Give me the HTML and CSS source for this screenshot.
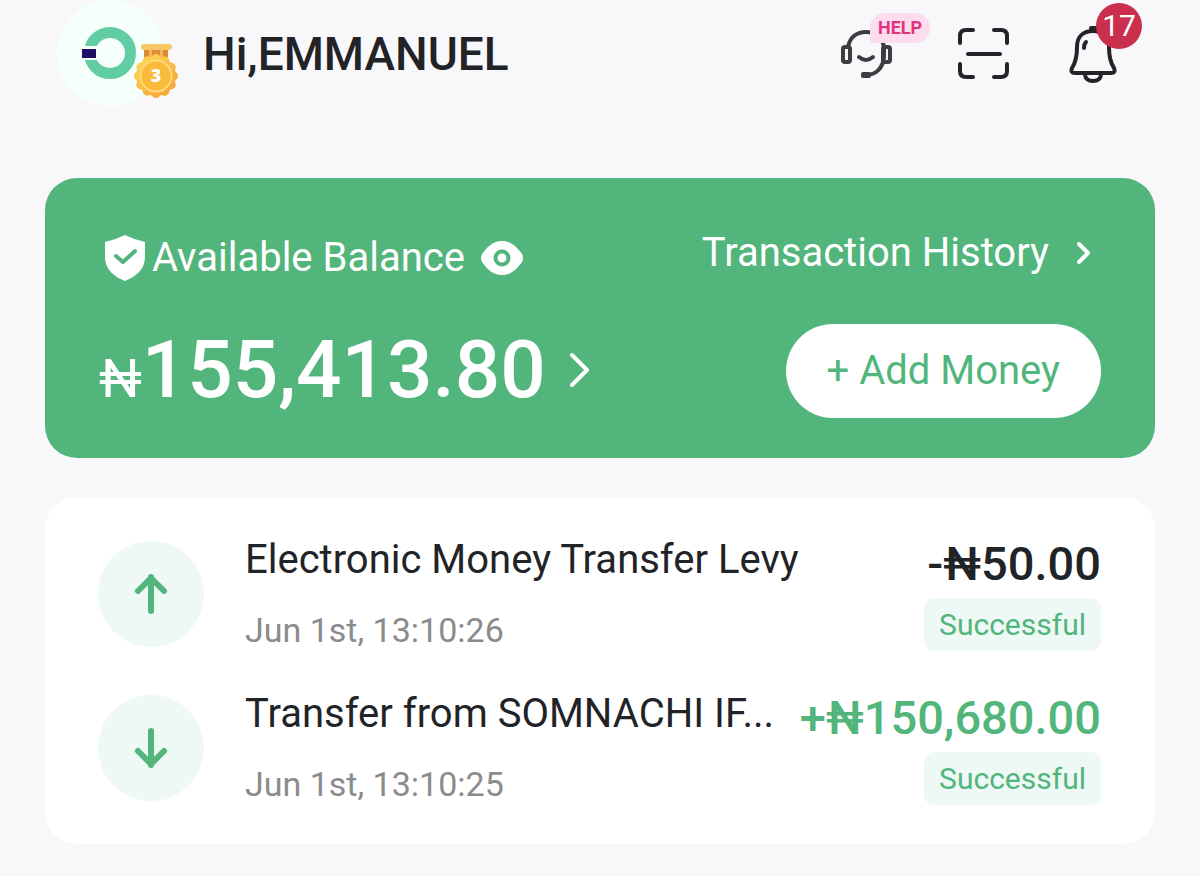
FILE: index.html
```html
<!DOCTYPE html>
<html lang="en">
<head>
  <meta charset="UTF-8">
  <meta name="viewport" content="width=device-width, initial-scale=1.0">
  <title>Wallet</title>
  <link rel="stylesheet" href="styles.css">
</head>
<body>

  <header class="topbar">
    <div class="profile">
      <svg class="avatar" viewBox="0 0 124 108" aria-hidden="true">
        <defs>
          <linearGradient id="gold" gradientUnits="userSpaceOnUse" x1="84" y1="58" x2="116" y2="98">
            <stop offset="0" stop-color="#ffd653"/>
            <stop offset="1" stop-color="#f6a035"/>
          </linearGradient>
        </defs>
        <circle cx="54" cy="53" r="53" fill="#f5fffb"/>
        <circle cx="54" cy="53" r="20.500" fill="none" stroke="#62cda3" stroke-width="11"/>
        <rect x="24" y="46" width="18" height="14" fill="#f5fffb"/>
        <rect x="26" y="49" width="14" height="9" fill="#1f0e64"/>
        <rect x="88" y="48" width="24" height="10" fill="#df8a36"/>
        <rect x="93" y="48" width="3" height="10" fill="#f4b45c"/>
        <rect x="104" y="48" width="3" height="10" fill="#f4b45c"/>
        <rect x="85" y="44" width="31" height="6" rx="3" fill="#f9c766"/>
        <circle cx="100" cy="76" r="18" fill="none" stroke="url(#gold)" stroke-width="8" stroke-linecap="round" pathLength="12" stroke-dasharray=".01 .99"/>
        <circle cx="100" cy="76" r="20" fill="url(#gold)"/>
        <circle cx="100" cy="76" r="15.500" fill="#fabb3a" stroke="#ffd877" stroke-width="2"/>
        <text x="100" y="82" class="medal-level">3</text>
      </svg>
      <h1 class="greeting">Hi,EMMANUEL</h1>
    </div>

    <nav class="actions" aria-label="Shortcuts">
      <button class="icon-btn" type="button" aria-label="Customer service">
        <svg width="58" height="54" viewBox="0 0 58 54" fill="none" stroke="#3c3d41" stroke-width="4">
          <path d="M9 21C10 11 17 5 27 5C37 5 44 11 45 21V30C44 41 37 48 27 48"/>
          <rect x="4" y="20" width="7" height="15" rx="2"/>
          <rect x="44" y="20" width="7" height="15" rx="2"/>
          <path d="M20 30Q27 36 34 30" stroke-width="4" stroke-linecap="round"/>
          <rect x="22" y="45" width="10" height="6" rx="2" fill="#3c3d41" stroke="none"/>
        </svg>
        <span class="help-tag">HELP</span>
      </button>
      <button class="icon-btn" type="button" aria-label="Scan">
        <svg width="54" height="54" viewBox="0 0 54 54" fill="none" stroke="#222428" stroke-width="4" stroke-linecap="round" stroke-linejoin="round">
          <path d="M4 16V9Q4 3 10 3H17M38 3H45Q51 3 51 9V16M51 37V44Q51 50 45 50H38M17 50H10Q4 50 4 44V37M12 27H44"/>
        </svg>
      </button>
      <button class="icon-btn" type="button" aria-label="Notifications">
        <svg width="48" height="60" viewBox="3 0 48 60" fill="none" stroke="#222428" stroke-width="4" stroke-linecap="round" stroke-linejoin="round">
          <path d="M27 7C16 7 11 14 11 23C11 32 10 38 6 44Q4 49 9 49H45Q50 49 48 44C44 38 43 32 43 23C43 14 38 7 27 7Z"/>
          <path d="M25 4H30M19 51Q20 57 27 57Q34 57 35 51M18 24Q18 20 20 18"/>
        </svg>
        <span class="count">17</span>
      </button>
    </nav>
  </header>

  <main>
    <section class="balance-card">
      <div class="balance-info">
        <div class="balance-label">
          <svg width="42" height="48" viewBox="0 0 42 48" aria-hidden="true">
            <path d="M21 1Q31 6 41 8V23C41 36 31 43 21 47C11 43 1 36 1 23V8Q11 6 21 1Z" fill="#fff"/>
            <path d="M12 22L19 28L31 17" fill="none" stroke="#52b57c" stroke-width="4" stroke-linecap="round" stroke-linejoin="round"/>
          </svg>
          <span>Available Balance</span>
          <button class="plain-btn eye" type="button" aria-label="Hide balance">
            <svg width="42" height="34" viewBox="0 0 42 34">
              <path d="M21 0C30 0 36 6 41 13Q43 17 41 21C36 28 30 34 21 34C12 34 6 28 1 21Q-1 17 1 13C6 6 12 0 21 0Z" fill="#fff"/>
              <circle cx="21" cy="17" r="6.500" fill="none" stroke="#52b57c" stroke-width="4"/>
            </svg>
          </button>
        </div>
        <a class="balance" href="#">
          <span><span class="currency">₦</span>155,413.80</span>
          <svg width="20" height="36" viewBox="0 0 20 36" fill="none" stroke="#fff" stroke-width="4" stroke-linecap="round" stroke-linejoin="round" aria-hidden="true">
            <path d="M2 3L17 18L2 33"/>
          </svg>
        </a>
      </div>
      <div class="balance-actions">
        <a class="history" href="#">
          <span>Transaction History</span>
          <svg width="14" height="24" viewBox="0 0 14 24" fill="none" stroke="#fff" stroke-width="4" stroke-linecap="round" stroke-linejoin="round" aria-hidden="true">
            <path d="M2 3L11 12L2 21"/>
          </svg>
        </a>
        <button class="add-btn" type="button">+ Add Money</button>
      </div>
    </section>

    <ul class="transactions">
      <li class="transaction">
        <span class="direction">
          <svg width="34" height="40" viewBox="0 0 34 40" fill="none" stroke="#52b57c" stroke-width="6" stroke-linecap="round" stroke-linejoin="round" aria-hidden="true">
            <path d="M17 37V3M4 17L17 4L30 17"/>
          </svg>
        </span>
        <div class="details">
          <p class="title">Electronic Money Transfer Levy</p>
          <p class="date">Jun 1st, 13:10:26</p>
        </div>
        <div class="result">
          <p class="amount">-₦50.00</p>
          <span class="status">Successful</span>
        </div>
      </li>
      <li class="transaction">
        <span class="direction">
          <svg width="34" height="40" viewBox="0 0 34 40" fill="none" stroke="#52b57c" stroke-width="6" stroke-linecap="round" stroke-linejoin="round" aria-hidden="true">
            <path d="M17 3V37M4 23L17 36L30 23"/>
          </svg>
        </span>
        <div class="details">
          <p class="title">Transfer from SOMNACHI IF...</p>
          <p class="date">Jun 1st, 13:10:25</p>
        </div>
        <div class="result">
          <p class="amount incoming">+₦150,680.00</p>
          <span class="status">Successful</span>
        </div>
      </li>
    </ul>
  </main>

</body>
</html>
```
FILE: styles.css
```css
* { box-sizing: border-box; }
body { margin: 0; padding: 0 45px 32px; background-color: #f8f8fb; color: #222326; font-family: Roboto, "Liberation Sans", sans-serif; }
h1, p, ul { margin: 0; padding: 0; }
a { color: inherit; text-decoration: none; }
button { font-family: inherit; cursor: pointer; }
svg { display: block; flex-shrink: 0; }

/* top bar */
.topbar { display: flex; justify-content: space-between; align-items: center; height: 108px; margin: 0 38px 70px 11px; }
.profile { display: flex; align-items: center; gap: 23px; }
.avatar { width: 124px; height: 108px; }
.medal-level { font-family: "Open Sans", sans-serif; font-size: 18px; font-weight: 800; fill: #fff; text-anchor: middle; }
.greeting { font-size: 46px; font-weight: 500; line-height: 56px; }
.actions { display: flex; align-items: center; gap: 59px; }
.icon-btn { position: relative; padding: 0; border: 0; background: none; }
.help-tag { position: absolute; top: -14px; left: 31px; padding: 0 8px; border-radius: 15px 15px 15px 4px; background-color: #fddcee; color: #e2337f; font-size: 18px; font-weight: 700; line-height: 30px; }
.count { position: absolute; top: -21px; left: 27px; width: 46px; border-radius: 50%; background-color: #cb2f4e; color: #fff; font-size: 30px; line-height: 46px; text-align: center; }

/* balance */
.balance-card { display: flex; justify-content: space-between; padding: 51px 54px 40px; border-radius: 32px; background-color: #52b57c; color: #fff; }
.plain-btn { padding: 0; border: 0; background: none; }
.balance-label { display: flex; align-items: center; gap: 6px; margin-left: 5px; font-size: 40px; line-height: 58px; }
.eye { margin-left: 10px; }
.balance { display: flex; align-items: center; gap: 24px; margin-top: 36px; font-size: 80px; font-weight: 500; line-height: 94px; }
.currency { font-size: 54px; font-weight: 400; line-height: 54px; }
.balance-actions { display: flex; flex-direction: column; align-items: flex-end; gap: 47px; }
.history { display: flex; align-items: center; gap: 28px; margin-right: 10px; font-size: 40px; line-height: 48px; }
.add-btn { padding: 0 41px; border: 0; border-radius: 47px; background-color: #fff; color: #52b57c; font-size: 40px; line-height: 94px; }

/* transactions */
.transactions { display: flex; flex-direction: column; gap: 34px; margin-top: 39px; padding: 37px 54px 36px 53px; border-radius: 32px; background-color: #fff; list-style: none; }
.transaction { display: flex; align-items: center; }
.direction { display: flex; justify-content: center; align-items: center; flex-shrink: 0; width: 106px; height: 106px; margin-right: 41px; border-radius: 50%; background-color: #eef9f5; }
.details { flex: 1; min-width: 0; }
.title { overflow: hidden; font-size: 40px; line-height: 52px; white-space: nowrap; text-overflow: ellipsis; }
.date { margin-top: 20px; color: #8b8b8d; font-size: 34px; line-height: 48px; }
.result { display: flex; flex-direction: column; align-items: flex-end; gap: 8px; }
.amount { font-size: 47px; font-weight: 500; line-height: 52px; }
.incoming { color: #52b57c; }
.status { padding: 0 15px; border-radius: 10px; background-color: #eef9f5; color: #52b57c; font-size: 30px; line-height: 53px; }
```
